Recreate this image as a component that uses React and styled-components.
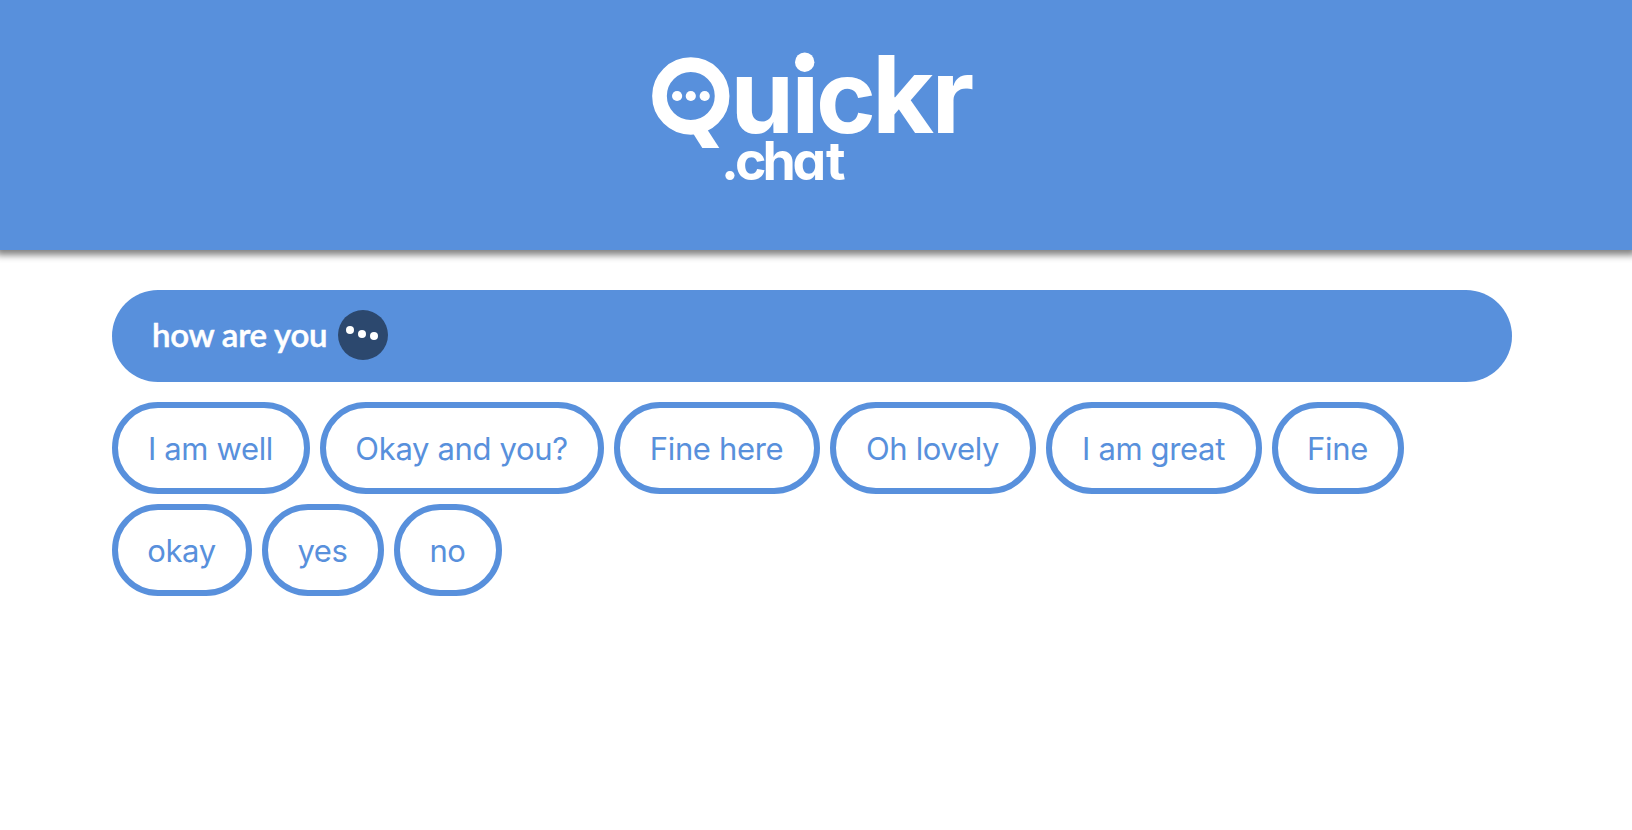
import styled, { createGlobalStyle } from "styled-components";

const replies = [
  { text: "I am well", width: 198 },
  { text: "Okay and you?", width: 284 },
  { text: "Fine here", width: 206 },
  { text: "Oh lovely", width: 206 },
  { text: "I am great", width: 216 },
  { text: "Fine", width: 132 },
  { text: "okay", width: 140 },
  { text: "yes", width: 122 },
  { text: "no", width: 108 },
];

export default function App() {
  return (
    <>
      <GlobalStyle />
      <Header>
        <Logo />
      </Header>
      <Chat>
        <Message>
          <MessageText>how are you</MessageText>
          <Typing>
            <Dot $drop={-5} />
            <Dot $drop={-1} />
            <Dot $drop={1} />
          </Typing>
        </Message>
        <Replies>
          {replies.map(({ text, width }) => (
            <Reply key={text} $width={width}>
              {text}
            </Reply>
          ))}
        </Replies>
      </Chat>
    </>
  );
}

function Logo() {
  return (
    <LogoSvg viewBox="650 50 326 134" aria-label="Quickr.chat">
      <circle cx="690.8" cy="96" r="31.3" fill="none" stroke="#fff" strokeWidth="14.7" />
      <circle cx="677.1" cy="96" r="5.1" />
      <circle cx="690.8" cy="96" r="5.1" />
      <circle cx="704.7" cy="96" r="5.1" />
      <path d="M691 130 L702.3 148 H719.3 L705 126 Z" />
      <LogoText x="730.5 791.5 816" y="133" $size={102}>
        uic
        <Letter x="872" $size={107}>
          k
        </Letter>
        <Letter x="931.5" $size={105}>
          r
        </Letter>
      </LogoText>
      <circle cx="804.7" cy="62.2" r="9.7" />
      <LogoText x="721 735 762.5 792.5 826" y="179.7" $size={53.5}>
        .chat
      </LogoText>
    </LogoSvg>
  );
}

const GlobalStyle = createGlobalStyle`
  * {
    box-sizing: border-box;
  }
  body {
    margin: 0;
    background: #fff;
    font-family: Inter, "Liberation Sans", sans-serif;
  }
`;

const Header = styled.header`
  height: 250px;
  padding-top: 50px;
  background: #5890dc;
  box-shadow: 0 1px 7px 4px gray;
`;

const LogoSvg = styled.svg`
  display: block;
  width: 326px;
  height: 134px;
  margin-left: 650px;
  fill: #fff;
  overflow: visible;
`;

const LogoText = styled.text`
  font-size: ${({ $size }) => $size}px;
  font-weight: 700;
  font-feature-settings: "cv11";
`;

const Letter = styled.tspan`
  font-size: ${({ $size }) => $size}px;
`;

const Chat = styled.main`
  width: 1400px;
  margin: 40px 0 0 112px;
`;

const Message = styled.div`
  display: flex;
  align-items: center;
  gap: 10px;
  height: 92px;
  padding: 0 0 2px 40px;
  border-radius: 46px;
  background: #5890dc;
  color: #fff;
`;

const MessageText = styled.p`
  width: 176px;
  margin: -2px 0 0;
  font-family: Lato, sans-serif;
  font-size: 33px;
  font-weight: 600;
  letter-spacing: -0.25px;
  -webkit-text-stroke: 0.5px #fff;
  white-space: nowrap;
`;

const Typing = styled.div`
  display: flex;
  align-items: center;
  justify-content: center;
  gap: 4px;
  width: 50px;
  height: 50px;
  padding-right: 2px;
  border-radius: 50%;
  background: #2c486e;
`;

const Dot = styled.span`
  width: 8px;
  height: 8px;
  border-radius: 50%;
  background: #fff;
  transform: translateY(${({ $drop }) => $drop}px);
`;

const Replies = styled.div`
  display: flex;
  flex-wrap: wrap;
  gap: 10px;
  margin-top: 20px;
`;

const Reply = styled.button`
  width: ${({ $width }) => $width}px;
  height: 92px;
  padding: 0 1px 0 0;
  border: 6px solid #5890dc;
  border-radius: 46px;
  background: #fff;
  color: #5890dc;
  font-family: inherit;
  font-size: 31px;
  letter-spacing: -0.35px;
  white-space: nowrap;
`;
